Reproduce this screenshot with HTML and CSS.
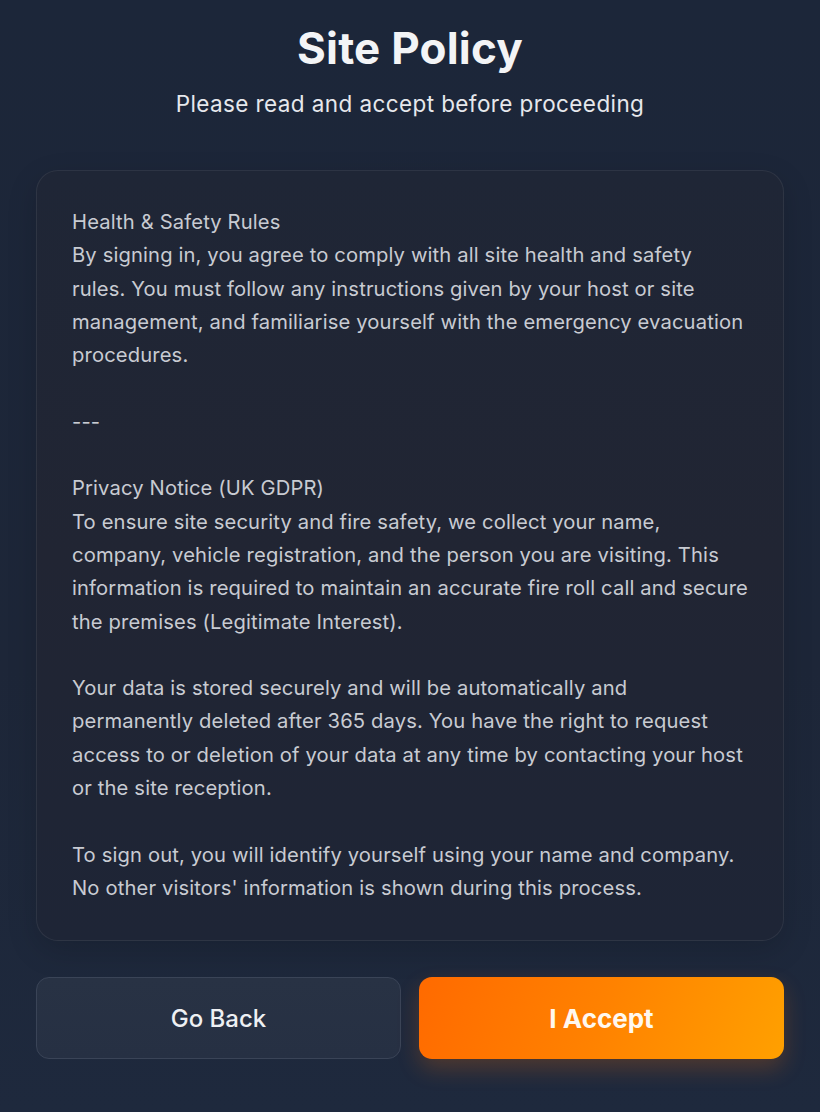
FILE: index.html
```html
<!DOCTYPE html>
<html lang="en">
<head>
<meta charset="utf-8">
<title>Site Policy</title>
<link rel="stylesheet" href="styles.css">
</head>
<body>
<main class="page">
  <header class="header">
    <h1 class="title">Site Policy</h1>
    <p class="subtitle">Please read and accept before proceeding</p>
  </header>
  <section class="card">
    <div class="policy">Health &amp; Safety Rules
By signing in, you agree to comply with all site health and safety rules. You must follow any instructions given by your host or site management, and familiarise yourself with the emergency evacuation procedures.

---

Privacy Notice (UK GDPR)
To ensure site security and fire safety, we collect your name, company, vehicle registration, and the person you are visiting. This information is required to maintain an accurate fire roll call and secure the premises (Legitimate Interest).

Your data is stored securely and will be automatically and permanently deleted after 365 days. You have the right to request access to or deletion of your data at any time by contacting your host or the site reception.

To sign out, you will identify yourself using your name and company. No other visitors' information is shown during this process.</div>
  </section>
  <div class="actions">
    <button class="btn btn-back" type="button">Go Back</button>
    <button class="btn btn-accept" type="button">I Accept</button>
  </div>
</main>
</body>
</html>
```

FILE: styles.css
```css
html, body {
  margin: 0;
  padding: 0;
}
body {
  min-height: 1112px;
  background:
    radial-gradient(ellipse 60% 45% at 50% 45%, rgba(40, 40, 50, 0.35), rgba(0,0,0,0) 70%),
    linear-gradient(180deg, #1c2639 0%, #1d2638 60%, #1e293d 100%);
  font-family: Inter, "Noto Sans", sans-serif;
  color: #e9ebef;
}
.page {
  padding: 24px 36px 0;
  display: flex;
  flex-direction: column;
}
.header {
  text-align: center;
}
.title {
  margin: 0;
  font-size: 44px;
  line-height: 48px;
  font-weight: 700;
  color: #f3f4f6;
  letter-spacing: 0.2px;
}
.subtitle {
  margin: 17px 0 0;
  font-size: 22.5px;
  line-height: 30px;
  font-weight: 400;
  color: #e6e8ec;
  letter-spacing: 0.4px;
}
.card {
  margin-top: 51px;
  background: linear-gradient(180deg, #1f2636 0%, #212533 50%, #1e2536 100%);
  border: 1px solid rgba(255, 255, 255, 0.07);
  border-radius: 22px;
  padding: 34px 33px 36px 35px;
  box-shadow: 0 10px 30px rgba(0, 0, 0, 0.15);
}
.policy {
  white-space: pre-line;
  font-size: 20.2px;
  line-height: 33.3px;
  letter-spacing: 0.14px;
  color: #c8cbd2;
}
.actions {
  margin-top: 36px;
  display: grid;
  grid-template-columns: 1fr 1fr;
  gap: 18px;
}
.btn {
  height: 82px;
  border-radius: 13px;
  font-family: Inter, "Noto Sans", sans-serif;
  cursor: pointer;
}
.btn-back {
  background: linear-gradient(180deg, #283244 0%, #263043 100%);
  border: 1px solid #3a4457;
  color: #eef0f3;
  font-size: 24px;
  font-weight: 500;
}
.btn-accept {
  background: linear-gradient(110deg, #ff6a00 0%, #ff8200 50%, #ffa000 100%);
  border: none;
  color: #fff8ef;
  font-size: 26px;
  font-weight: 700;
  box-shadow: 0 10px 22px rgba(255, 115, 0, 0.22);
}
```
